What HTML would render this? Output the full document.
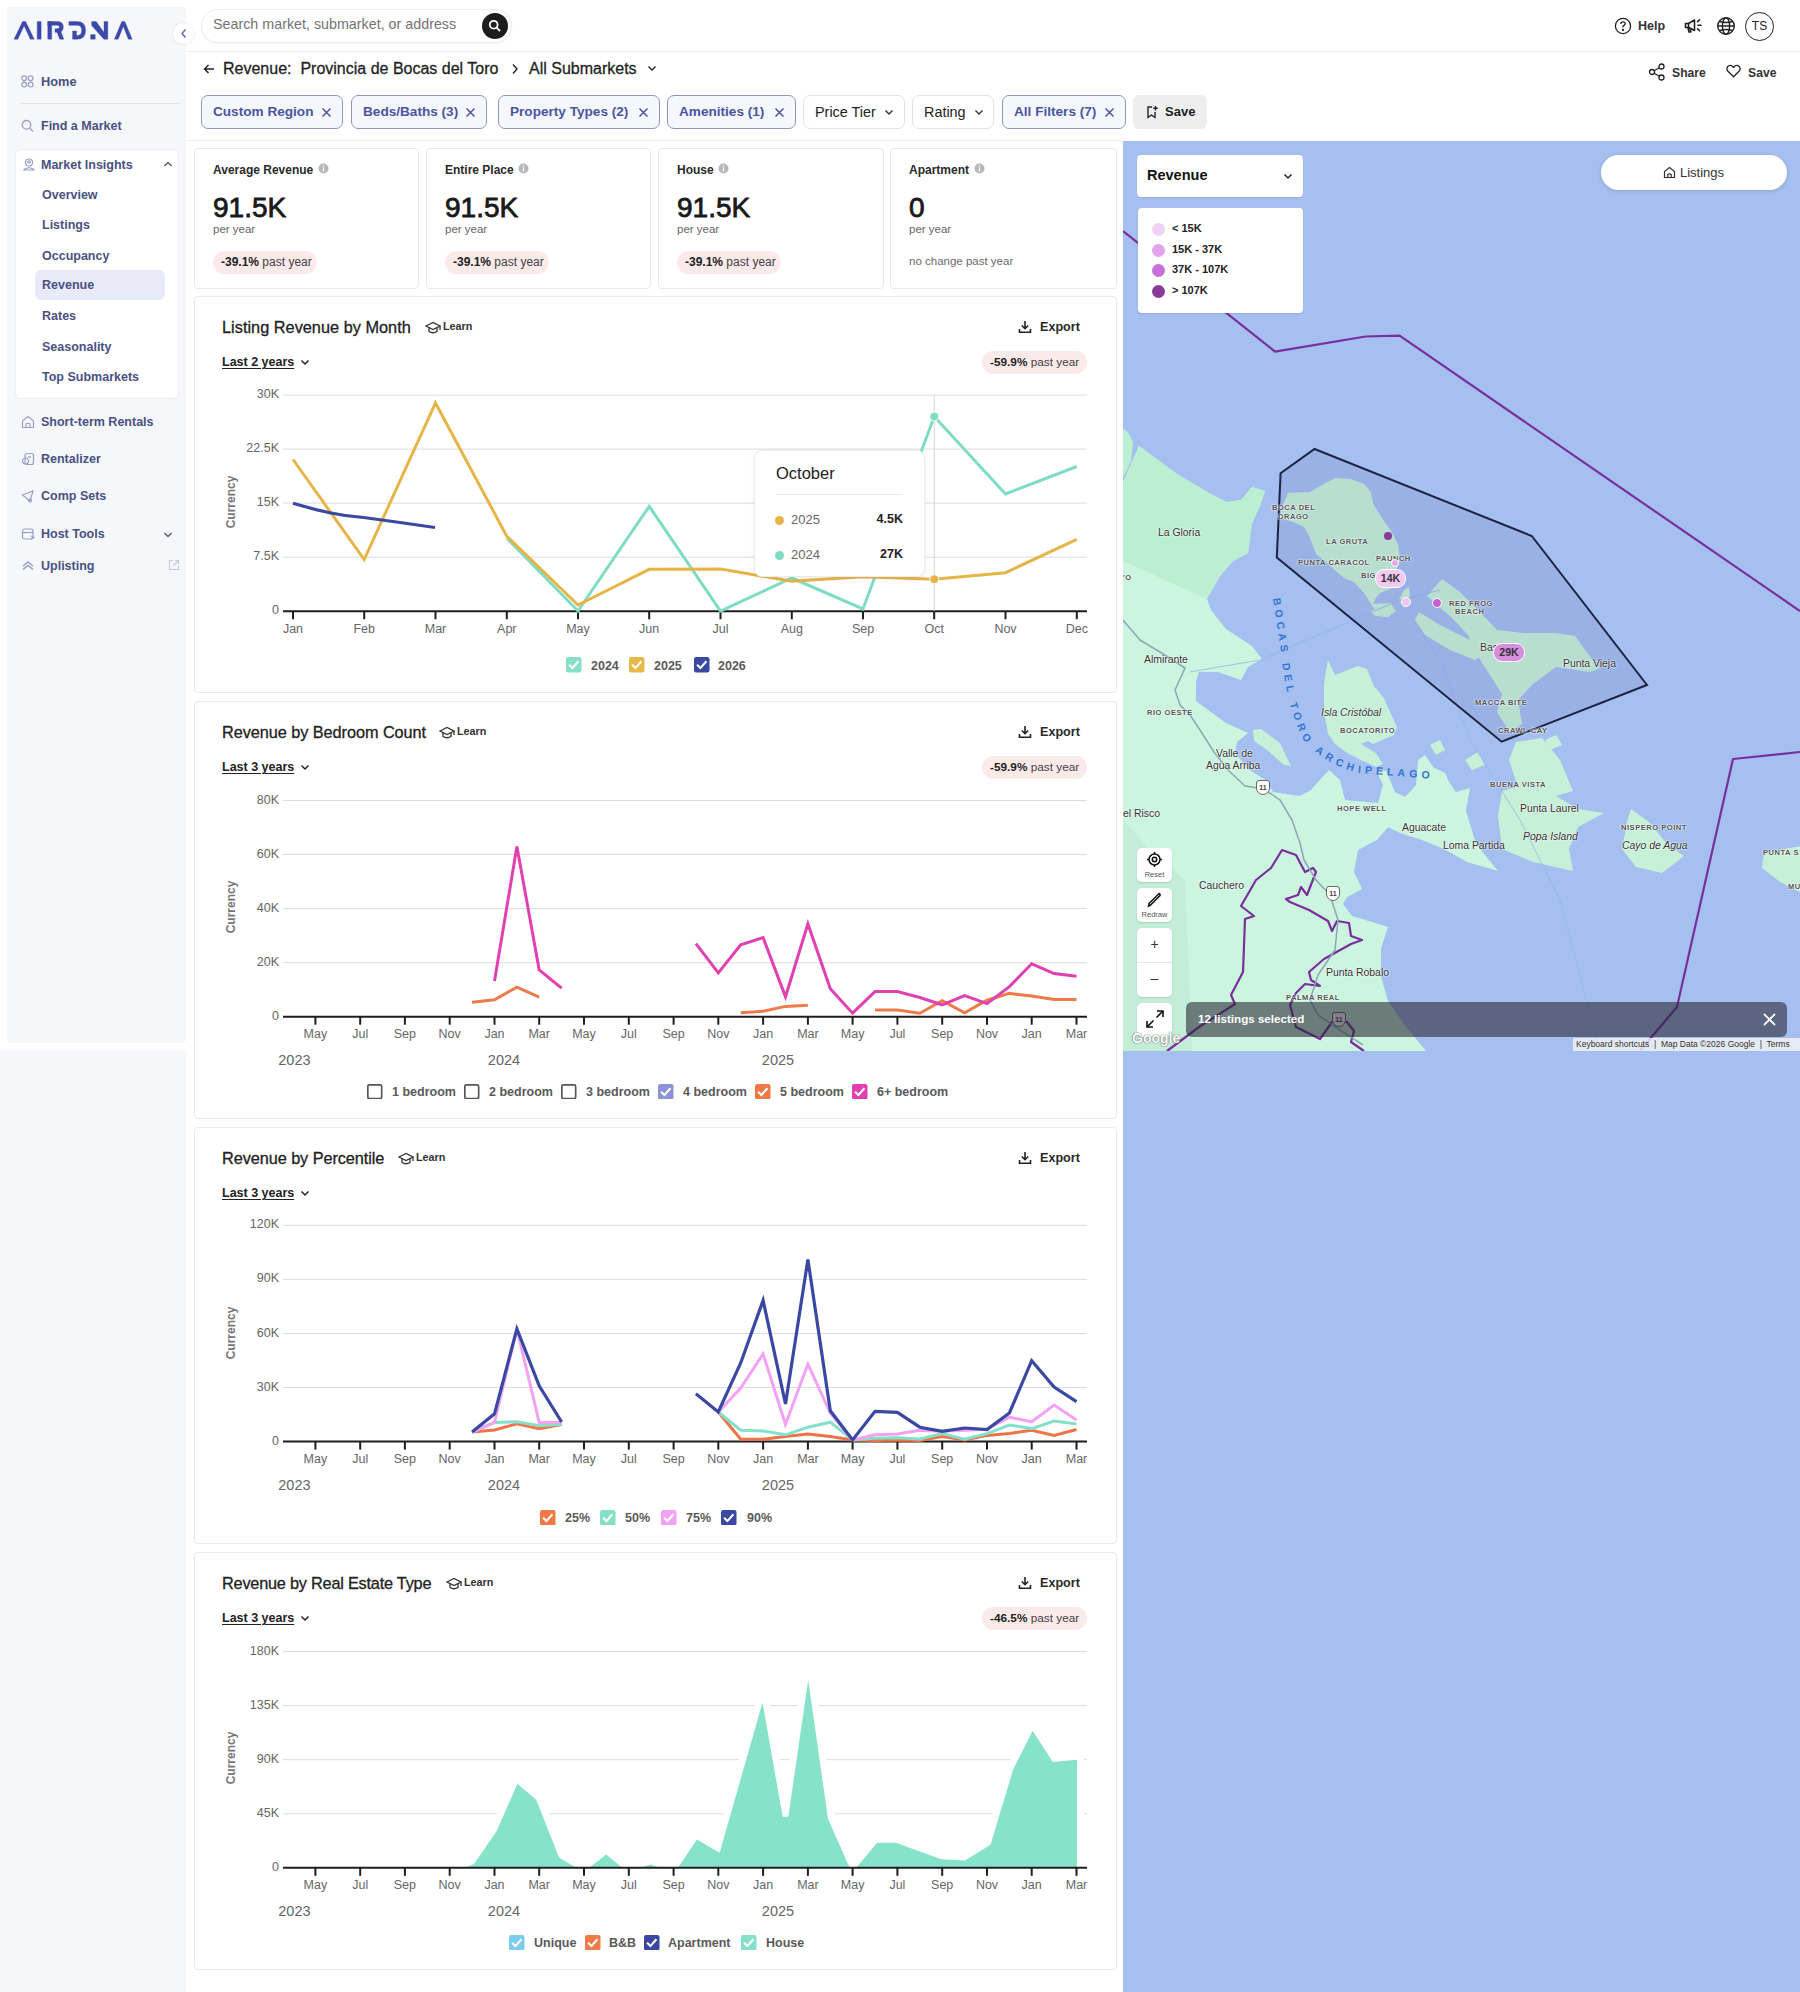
<!DOCTYPE html><html><head><meta charset="utf-8"><style>

*{box-sizing:border-box;margin:0;padding:0}
html,body{width:1800px;height:1992px;overflow:hidden;background:#fff;font-family:"Liberation Sans",sans-serif;color:#222;position:relative}
.a{position:absolute;white-space:nowrap}
.sb{color:#4a5183;font-weight:bold;font-size:12.5px}
.chip{position:absolute;top:95px;height:34px;border:1.5px solid #8f95bd;background:#f6f7fc;border-radius:7px;color:#4a55a0;font-weight:bold;font-size:13.6px;line-height:31px;padding-left:11px}
.chip2{position:absolute;top:95px;height:34px;border:1px solid #e2e2e6;background:#fff;border-radius:7px;color:#222;font-size:14.4px;line-height:32px;padding-left:11px}
.card{position:absolute;border:1px solid #e9e9ed;border-radius:4px;background:#fff}
.klab{font-size:12px;font-weight:bold;color:#2a2a2a}
.kval{font-size:28px;color:#1a1a1a;-webkit-text-stroke:0.8px #1a1a1a}
.kper{font-size:11.5px;color:#666}
.pill{position:absolute;white-space:nowrap;height:23px;border-radius:12px;background:#fbeaea;font-size:12px;line-height:23px;padding:0 8px;color:#444}
.pill b{color:#222}
.ctitle{font-size:16.3px;color:#222;-webkit-text-stroke:0.3px #222}
.learn{font-size:11.5px;font-weight:bold;color:#333}
.period{font-size:12.5px;font-weight:bold;color:#222;text-decoration:underline;text-underline-offset:2px}
.export{font-size:13px;font-weight:bold;color:#222}
.ylab{font-size:12.5px;color:#666;text-align:right}
.xlab{font-size:12.5px;color:#666}
.cur{font-size:12px;font-weight:bold;color:#777;transform:rotate(-90deg);transform-origin:center}
.leg{font-size:12.5px;font-weight:bold;color:#5a5a5a}

</style></head><body>
<div class="a" style="left:7px;top:7px;width:179px;height:1036px;background:#f6f7fb;border-radius:4px"></div>
<div class="a" style="left:0;top:1050px;width:186px;height:942px;background:#f6f7fb"></div>
<svg class="a" style="left:13px;top:20px" width="122" height="22" viewBox="0 0 122 22">
<g fill="#3c49a8" stroke="#3c49a8" stroke-width="0.4" stroke-linejoin="round">
<path d="M1,19.2 L9.6,1.6 H12.6 L21.2,19.2 H17.4 L11.1,5.8 L4.8,19.2 Z"/>
<rect x="24.2" y="1.6" width="3.9" height="17.6"/>
<rect x="34.8" y="1.6" width="3.9" height="17.6"/>
<path d="M34.8,1.6 H44 Q50.3,1.6 50.3,7 Q50.3,12.3 44.5,12.3 H42 V8.7 H44 Q46.5,8.7 46.5,7 Q46.5,5.2 44,5.2 H34.8 Z"/>
<path d="M43.6,11 H47.6 L50.8,19.2 H46.8 Z"/>
<path d="M55.9,1.6 H64 Q72.6,1.6 72.6,10.4 Q72.6,19.2 64,19.2 H59.6 V11 H63.5 V15.5 H64 Q68.7,15.5 68.7,10.4 Q68.7,5.3 64,5.3 H55.9 Z"/>
<rect x="77.6" y="14.6" width="4.6" height="4.6"/>
<path d="M78.7,1.6 H83.2 L91,12.6 V1.6 H94.8 V19.2 H90.9 L78.7,5.6 Z"/>
<path d="M101.4,19.2 L108.8,1.6 H111.8 L119.2,19.2 H115.4 L110.3,6.2 L105.2,19.2 Z"/>
</g></svg>
<div class="a" style="left:173px;top:23px;width:21px;height:21px;border-radius:50%;background:#fff;box-shadow:0 0 3px rgba(0,0,0,.12)"></div>
<svg class="a" style="left:179px;top:28px" width="10" height="11" viewBox="0 0 10 11"><path d="M6.5 1.5 L3 5.5 L6.5 9.5" stroke="#5a64a8" stroke-width="1.4" fill="none"/></svg>
<svg class="a" style="left:21px;top:75px" width="13" height="13" viewBox="0 0 13 13" fill="none" stroke="#9aa0c4" stroke-width="1.2"><circle cx="3.2" cy="3.2" r="2.4"/><circle cx="9.6" cy="3.2" r="2.4"/><circle cx="3.2" cy="9.6" r="2.4"/><circle cx="9.6" cy="9.6" r="2.4"/></svg>
<div class="a sb" style="left:41px;top:74px;font-size:12.8px">Home</div>
<div class="a" style="left:21px;top:103px;width:160px;height:1px;background:#e3e4ea"></div>
<svg class="a" style="left:21px;top:119px" width="13" height="14" viewBox="0 0 13 14" fill="none" stroke="#9aa0c4" stroke-width="1.3"><circle cx="5.5" cy="5.8" r="4.3"/><path d="M8.7 9.2 L12 12.5"/></svg>
<div class="a sb" style="left:41px;top:119px">Find a Market</div>
<div class="a" style="left:15px;top:149px;width:164px;height:250px;background:#fff;border:1px solid #eceef3;border-radius:6px"></div>
<svg class="a" style="left:22px;top:157px" width="14" height="14" viewBox="0 0 14 14" fill="none" stroke="#9aa0c4" stroke-width="1.2"><circle cx="7" cy="5.5" r="3.5"/><circle cx="7" cy="5" r="1.2"/><path d="M2 12.5 Q7 9 12 12.5 L12 13 H2 Z"/></svg>
<div class="a sb" style="left:41px;top:158px">Market Insights</div>
<svg class="a" style="left:163px;top:160px" width="10" height="8" viewBox="0 0 10 8"><path d="M1.5 6 L5 2.5 L8.5 6" stroke="#556" stroke-width="1.3" fill="none"/></svg>
<div class="a sb" style="left:42px;top:188px">Overview</div>
<div class="a sb" style="left:42px;top:218px">Listings</div>
<div class="a sb" style="left:42px;top:248.5px">Occupancy</div>
<div class="a" style="left:35px;top:270px;width:130px;height:30px;background:#e8eaf8;border-radius:6px"></div>
<div class="a sb" style="left:42px;top:278px">Revenue</div>
<div class="a sb" style="left:42px;top:309px">Rates</div>
<div class="a sb" style="left:42px;top:339.5px">Seasonality</div>
<div class="a sb" style="left:42px;top:369.5px">Top Submarkets</div>
<svg class="a" style="left:21px;top:415px" width="14" height="14" viewBox="0 0 14 14" fill="none" stroke="#9aa0c4" stroke-width="1.2"><path d="M1.5 12.5 V6 L7 1.5 L12.5 6 V12.5 Z"/><path d="M5 12.5 V9 Q7 7.5 9 9 V12.5"/></svg>
<div class="a sb" style="left:41px;top:415px">Short-term Rentals</div>
<svg class="a" style="left:21px;top:452px" width="14" height="14" viewBox="0 0 14 14" fill="none" stroke="#9aa0c4" stroke-width="1.2"><rect x="4" y="1.5" width="8.5" height="11" rx="2"/><circle cx="4.5" cy="9" r="3"/><path d="M7 5 H10"/></svg>
<div class="a sb" style="left:41px;top:452px">Rentalizer</div>
<svg class="a" style="left:21px;top:489px" width="14" height="14" viewBox="0 0 14 14" fill="none" stroke="#9aa0c4" stroke-width="1.2"><path d="M1.5 6 L12 2 L9 12 Z"/><circle cx="9" cy="11.5" r="1.5"/></svg>
<div class="a sb" style="left:41px;top:489px">Comp Sets</div>
<svg class="a" style="left:21px;top:527px" width="14" height="14" viewBox="0 0 14 14" fill="none" stroke="#9aa0c4" stroke-width="1.2"><rect x="1.5" y="2" width="10.5" height="10" rx="2"/><path d="M1.5 5.5 H12"/><path d="M10 9 L13 10.5 L10 12"/></svg>
<div class="a sb" style="left:41px;top:527px">Host Tools</div>
<svg class="a" style="left:163px;top:531px" width="10" height="8" viewBox="0 0 10 8"><path d="M1.5 2 L5 5.5 L8.5 2" stroke="#556" stroke-width="1.3" fill="none"/></svg>
<svg class="a" style="left:21px;top:559px" width="14" height="13" viewBox="0 0 14 13" fill="none" stroke="#9aa0c4" stroke-width="1.5"><path d="M2 7 L7 3 L12 7"/><path d="M2 10.5 L7 6.5 L12 10.5"/></svg>
<div class="a sb" style="left:41px;top:559px">Uplisting</div>
<svg class="a" style="left:168px;top:559px" width="12" height="12" viewBox="0 0 12 12" fill="none" stroke="#c5c9e0" stroke-width="1.1"><path d="M5 1.5 H1.5 V10.5 H10.5 V7"/><path d="M7 1.5 H10.5 V5 M10.5 1.5 L5.5 6.5"/></svg>
<div class="a" style="left:187px;top:51px;width:1613px;height:1px;background:#ececef"></div>
<div class="a" style="left:201px;top:9px;width:311px;height:34px;border-radius:17px;background:#fff;border:1px solid #ededf0;box-shadow:0 1px 2px rgba(0,0,0,.04)"></div>
<div class="a" style="left:213px;top:16px;font-size:14.3px;color:#737373">Search market, submarket, or address</div>
<div class="a" style="left:482px;top:12.5px;width:26px;height:26px;border-radius:50%;background:#1d1d1d"></div>
<svg class="a" style="left:488px;top:18.5px" width="14" height="14" viewBox="0 0 14 14" fill="none" stroke="#fff" stroke-width="1.8"><circle cx="5.7" cy="5.7" r="3.9"/><path d="M8.6 8.6 L12 12"/></svg>
<svg class="a" style="left:1614px;top:17px" width="18" height="18" viewBox="0 0 18 18" fill="none" stroke="#222" stroke-width="1.3"><circle cx="9" cy="9" r="7.6"/><path d="M6.8 7 Q6.8 4.8 9 4.8 Q11.2 4.8 11.2 6.8 Q11.2 8.2 9 9 V10.5"/><circle cx="9" cy="13" r=".5" fill="#222"/></svg>
<div class="a" style="left:1638px;top:18.5px;font-size:12.5px;font-weight:bold;color:#333">Help</div>
<svg class="a" style="left:1684px;top:18px" width="19" height="16" viewBox="0 0 19 16" fill="none" stroke="#1e1e1e" stroke-width="1.6" stroke-linejoin="round" stroke-linecap="round"><path d="M1.5 5.5 H4.5 L10.5 2 V12.5 L4.5 9.5 H1.5 Z"/><path d="M4 9.7 L5 14 H6.8 L6.3 10.3"/><path d="M4.5 5.5 V9.5"/><path d="M14 7.3 H17 M13.5 3.8 L15.5 1.8 M13.5 10.8 L15.5 12.8"/></svg>
<svg class="a" style="left:1716px;top:16px" width="20" height="20" viewBox="0 0 20 20" fill="none" stroke="#222" stroke-width="1.4"><circle cx="10" cy="10" r="8.3"/><ellipse cx="10" cy="10" rx="3.6" ry="8.3"/><path d="M1.7 10 H18.3 M3.5 5.5 Q10 7.5 16.5 5.5 M3.5 14.5 Q10 12.5 16.5 14.5"/></svg>
<div class="a" style="left:1745px;top:12px;width:29px;height:29px;border-radius:50%;border:1.2px solid #222;font-size:12px;color:#222;text-align:center;line-height:27px">TS</div>
<svg class="a" style="left:203px;top:63px" width="12" height="12" viewBox="0 0 12 12" fill="none" stroke="#222" stroke-width="1.4"><path d="M11 6 H1.5 M5.5 2 L1.5 6 L5.5 10"/></svg>
<div class="a" style="left:223px;top:60px;font-size:16px;color:#1f1f1f;-webkit-text-stroke:0.3px #1f1f1f">Revenue:&nbsp; Provincia de Bocas del Toro</div>
<svg class="a" style="left:511px;top:63px" width="8" height="12" viewBox="0 0 8 12" fill="none" stroke="#222" stroke-width="1.4"><path d="M2 1.5 L6 6 L2 10.5"/></svg>
<div class="a" style="left:529px;top:60px;font-size:16px;color:#1f1f1f;-webkit-text-stroke:0.3px #1f1f1f">All Submarkets</div>
<svg class="a" style="left:647px;top:65px" width="10" height="7" viewBox="0 0 10 7"><path d="M1.5 1.5 L5 5 L8.5 1.5" stroke="#222" stroke-width="1.4" fill="none"/></svg>
<svg class="a" style="left:1648px;top:63px" width="18" height="18" viewBox="0 0 18 18" fill="none" stroke="#222" stroke-width="1.3"><circle cx="4" cy="9" r="2.5"/><circle cx="13.5" cy="3.5" r="2.5"/><circle cx="13.5" cy="14.5" r="2.5"/><path d="M6.2 7.8 L11.3 4.8 M6.2 10.2 L11.3 13.2"/></svg>
<div class="a" style="left:1672px;top:65.5px;font-size:12.2px;font-weight:bold;color:#333">Share</div>
<svg class="a" style="left:1726px;top:64px" width="15" height="14" viewBox="0 0 15 14" fill="none" stroke="#222" stroke-width="1.3"><path d="M7.5 12.8 L2 7.3 Q0 5 1.5 2.8 Q3.5 0.5 6 2 L7.5 3.3 L9 2 Q11.5 0.5 13.5 2.8 Q15 5 13 7.3 Z"/></svg>
<div class="a" style="left:1748px;top:65.5px;font-size:12.2px;font-weight:bold;color:#333">Save</div>
<div class="chip" style="left:201px;width:142px">Custom Region</div>
<svg class="a" style="left:321px;top:107px" width="11" height="11" viewBox="0 0 11 11"><path d="M1.5 1.5 L9.5 9.5 M9.5 1.5 L1.5 9.5" stroke="#4a55a0" stroke-width="1.5"/></svg>
<div class="chip" style="left:351px;width:136px">Beds/Baths (3)</div>
<svg class="a" style="left:465px;top:107px" width="11" height="11" viewBox="0 0 11 11"><path d="M1.5 1.5 L9.5 9.5 M9.5 1.5 L1.5 9.5" stroke="#4a55a0" stroke-width="1.5"/></svg>
<div class="chip" style="left:498px;width:162px">Property Types (2)</div>
<svg class="a" style="left:638px;top:107px" width="11" height="11" viewBox="0 0 11 11"><path d="M1.5 1.5 L9.5 9.5 M9.5 1.5 L1.5 9.5" stroke="#4a55a0" stroke-width="1.5"/></svg>
<div class="chip" style="left:667px;width:129px">Amenities (1)</div>
<svg class="a" style="left:774px;top:107px" width="11" height="11" viewBox="0 0 11 11"><path d="M1.5 1.5 L9.5 9.5 M9.5 1.5 L1.5 9.5" stroke="#4a55a0" stroke-width="1.5"/></svg>
<div class="chip2" style="left:803px;width:102px">Price Tier</div>
<svg class="a" style="left:884px;top:109px" width="10" height="7" viewBox="0 0 10 7"><path d="M1.5 1.5 L5 5 L8.5 1.5" stroke="#333" stroke-width="1.4" fill="none"/></svg>
<div class="chip2" style="left:912px;width:82px">Rating</div>
<svg class="a" style="left:974px;top:109px" width="10" height="7" viewBox="0 0 10 7"><path d="M1.5 1.5 L5 5 L8.5 1.5" stroke="#333" stroke-width="1.4" fill="none"/></svg>
<div class="chip" style="left:1002px;width:124px">All Filters (7)</div>
<svg class="a" style="left:1104px;top:107px" width="11" height="11" viewBox="0 0 11 11"><path d="M1.5 1.5 L9.5 9.5 M9.5 1.5 L1.5 9.5" stroke="#4a55a0" stroke-width="1.5"/></svg>
<div class="a" style="left:1133px;top:95px;width:74px;height:34px;border-radius:6px;background:#eeeeef"></div>
<svg class="a" style="left:1146px;top:105px" width="13" height="14" viewBox="0 0 13 14" fill="none" stroke="#222" stroke-width="1.4"><path d="M6 2 H2 V12.5 L5.5 10 L9 12.5 V7"/><path d="M9.5 1 V5.5 M7.3 3.2 H11.7"/></svg>
<div class="a" style="left:1165px;top:104px;font-size:13px;font-weight:bold;color:#222">Save</div>
<div class="a" style="left:187px;top:140px;width:936px;height:1px;background:#efeff2"></div>
<div class="card" style="left:194px;top:148px;width:225px;height:141px"></div>
<div class="a klab" style="left:213px;top:163px">Average Revenue</div>
<svg class="a" style="left:318px;top:163px" width="11" height="11" viewBox="0 0 11 11"><circle cx="5.5" cy="5.5" r="5" fill="#b8b8bc"/><rect x="4.8" y="4.6" width="1.4" height="3.8" fill="#fff"/><circle cx="5.5" cy="3" r=".8" fill="#fff"/></svg>
<div class="a kval" style="left:213px;top:192px">91.5K</div>
<div class="a kper" style="left:213px;top:223px">per year</div>
<div class="pill" style="left:213px;top:251px;width:104px"><b>-39.1%</b> past year</div>
<div class="card" style="left:426px;top:148px;width:225px;height:141px"></div>
<div class="a klab" style="left:445px;top:163px">Entire Place</div>
<svg class="a" style="left:518px;top:163px" width="11" height="11" viewBox="0 0 11 11"><circle cx="5.5" cy="5.5" r="5" fill="#b8b8bc"/><rect x="4.8" y="4.6" width="1.4" height="3.8" fill="#fff"/><circle cx="5.5" cy="3" r=".8" fill="#fff"/></svg>
<div class="a kval" style="left:445px;top:192px">91.5K</div>
<div class="a kper" style="left:445px;top:223px">per year</div>
<div class="pill" style="left:445px;top:251px;width:104px"><b>-39.1%</b> past year</div>
<div class="card" style="left:658px;top:148px;width:226px;height:141px"></div>
<div class="a klab" style="left:677px;top:163px">House</div>
<svg class="a" style="left:718px;top:163px" width="11" height="11" viewBox="0 0 11 11"><circle cx="5.5" cy="5.5" r="5" fill="#b8b8bc"/><rect x="4.8" y="4.6" width="1.4" height="3.8" fill="#fff"/><circle cx="5.5" cy="3" r=".8" fill="#fff"/></svg>
<div class="a kval" style="left:677px;top:192px">91.5K</div>
<div class="a kper" style="left:677px;top:223px">per year</div>
<div class="pill" style="left:677px;top:251px;width:104px"><b>-39.1%</b> past year</div>
<div class="card" style="left:890px;top:148px;width:227px;height:141px"></div>
<div class="a klab" style="left:909px;top:163px">Apartment</div>
<svg class="a" style="left:974px;top:163px" width="11" height="11" viewBox="0 0 11 11"><circle cx="5.5" cy="5.5" r="5" fill="#b8b8bc"/><rect x="4.8" y="4.6" width="1.4" height="3.8" fill="#fff"/><circle cx="5.5" cy="3" r=".8" fill="#fff"/></svg>
<div class="a kval" style="left:909px;top:192px">0</div>
<div class="a kper" style="left:909px;top:223px">per year</div>
<div class="a" style="left:909px;top:255px;font-size:11.5px;color:#6b6b6b">no change past year</div>
<div class="card" style="left:194px;top:296px;width:923px;height:397px"></div>
<div class="a ctitle" style="left:222px;top:318px;letter-spacing:0.023px">Listing Revenue by Month</div>
<svg class="a" style="left:425px;top:321px" width="16" height="14" viewBox="0 0 16 14" fill="none" stroke="#333" stroke-width="1.3"><path d="M1 5 L8 1.5 L15 5 L8 8.5 Z"/><path d="M4 6.5 V10.5 Q8 13 12 10.5 V6.5"/><path d="M15 5 V9"/></svg>
<div class="a learn" style="left:443px;top:320px;font-size:10.8px">Learn</div>
<svg class="a" style="left:1018px;top:320px" width="14" height="14" viewBox="0 0 14 14" fill="none" stroke="#222" stroke-width="1.6"><path d="M7 1 V8.5 M3.8 5.5 L7 8.7 L10.2 5.5"/><path d="M1.5 9 V12.3 H12.5 V9"/></svg>
<div class="a export" style="left:1040px;top:320px;font-size:12.6px;color:#2a2a2a">Export</div>
<div class="a period" style="left:222px;top:355px">Last 2 years</div>
<svg class="a" style="left:300px;top:358.5px" width="10" height="7" viewBox="0 0 10 7"><path d="M1.5 1.5 L5 5 L8.5 1.5" stroke="#222" stroke-width="1.5" fill="none"/></svg>
<div class="pill" style="left:982px;top:351px;width:105px;font-size:11.8px"><b>-59.9%</b> past year</div>
<svg class="a" style="left:0;top:0" width="1800" height="1992"><line x1="283" y1="557.2" x2="1087" y2="557.2" stroke="#dcdcdf" stroke-width="1"/><line x1="283" y1="503.1" x2="1087" y2="503.1" stroke="#dcdcdf" stroke-width="1"/><line x1="283" y1="449.1" x2="1087" y2="449.1" stroke="#dcdcdf" stroke-width="1"/><line x1="283" y1="395.1" x2="1087" y2="395.1" stroke="#dcdcdf" stroke-width="1"/><line x1="283" y1="611.25" x2="1087" y2="611.25" stroke="#1e1e1e" stroke-width="2"/><line x1="293.0" y1="611.25" x2="293.0" y2="619.25" stroke="#1e1e1e" stroke-width="2"/><line x1="364.2" y1="611.25" x2="364.2" y2="619.25" stroke="#1e1e1e" stroke-width="2"/><line x1="435.5" y1="611.25" x2="435.5" y2="619.25" stroke="#1e1e1e" stroke-width="2"/><line x1="506.8" y1="611.25" x2="506.8" y2="619.25" stroke="#1e1e1e" stroke-width="2"/><line x1="578.0" y1="611.25" x2="578.0" y2="619.25" stroke="#1e1e1e" stroke-width="2"/><line x1="649.2" y1="611.25" x2="649.2" y2="619.25" stroke="#1e1e1e" stroke-width="2"/><line x1="720.5" y1="611.25" x2="720.5" y2="619.25" stroke="#1e1e1e" stroke-width="2"/><line x1="791.8" y1="611.25" x2="791.8" y2="619.25" stroke="#1e1e1e" stroke-width="2"/><line x1="863.0" y1="611.25" x2="863.0" y2="619.25" stroke="#1e1e1e" stroke-width="2"/><line x1="934.2" y1="611.25" x2="934.2" y2="619.25" stroke="#1e1e1e" stroke-width="2"/><line x1="1005.5" y1="611.25" x2="1005.5" y2="619.25" stroke="#1e1e1e" stroke-width="2"/><line x1="1076.8" y1="611.25" x2="1076.8" y2="619.25" stroke="#1e1e1e" stroke-width="2"/><line x1="934.3" y1="395" x2="934.3" y2="611" stroke="#d5d5d8" stroke-width="1"/><polyline points="506.8,538.0 578.0,611.0 649.2,506.3 720.5,611.0 791.8,578.0 863.0,609.0 934.2,416.5 1005.5,494.0 1076.8,466.5" fill="none" stroke="#7fdcc4" stroke-width="3" stroke-linejoin="miter" stroke-linecap="butt"/><polyline points="293.0,459.5 364.2,559.5 435.5,403.0 506.8,536.3 578.0,605.0 649.2,569.3 720.5,569.0 791.8,581.2 863.0,576.7 934.2,579.3 1005.5,572.7 1076.8,539.3" fill="none" stroke="#e6b548" stroke-width="3" stroke-linejoin="miter" stroke-linecap="butt"/><path d="M293.0,503.3 C320,511 340,516 363.75,517.5 C390,521 410,524 435,527.5" fill="none" stroke="#3a48a3" stroke-width="3.2"/><circle cx="934.3" cy="416.5" r="4.5" fill="#7fdcc4" stroke="#fff" stroke-width="1"/><circle cx="934.3" cy="579.3" r="4.5" fill="#e6b548" stroke="#fff" stroke-width="1"/></svg>
<div class="a ylab" style="left:219px;width:60px;top:603.2px">0</div>
<div class="a ylab" style="left:219px;width:60px;top:549.2px">7.5K</div>
<div class="a ylab" style="left:219px;width:60px;top:495.1px">15K</div>
<div class="a ylab" style="left:219px;width:60px;top:441.1px">22.5K</div>
<div class="a ylab" style="left:219px;width:60px;top:387.1px">30K</div>
<div class="a xlab" style="left:263.0px;width:60px;text-align:center;top:621.8px">Jan</div>
<div class="a xlab" style="left:334.2px;width:60px;text-align:center;top:621.8px">Feb</div>
<div class="a xlab" style="left:405.5px;width:60px;text-align:center;top:621.8px">Mar</div>
<div class="a xlab" style="left:476.8px;width:60px;text-align:center;top:621.8px">Apr</div>
<div class="a xlab" style="left:548.0px;width:60px;text-align:center;top:621.8px">May</div>
<div class="a xlab" style="left:619.2px;width:60px;text-align:center;top:621.8px">Jun</div>
<div class="a xlab" style="left:690.5px;width:60px;text-align:center;top:621.8px">Jul</div>
<div class="a xlab" style="left:761.8px;width:60px;text-align:center;top:621.8px">Aug</div>
<div class="a xlab" style="left:833.0px;width:60px;text-align:center;top:621.8px">Sep</div>
<div class="a xlab" style="left:904.2px;width:60px;text-align:center;top:621.8px">Oct</div>
<div class="a xlab" style="left:975.5px;width:60px;text-align:center;top:621.8px">Nov</div>
<div class="a xlab" style="left:1046.8px;width:60px;text-align:center;top:621.8px">Dec</div>
<div class="a cur" style="left:196px;width:70px;text-align:center;top:495px">Currency</div>
<div class="a" style="left:754px;top:450px;width:171px;height:127px;background:#fff;border:1px solid #ececef;border-radius:8px;box-shadow:0 1px 4px rgba(0,0,0,.08)"></div>
<div class="a" style="left:776px;top:464px;font-size:16.5px;color:#222">October</div>
<div class="a" style="left:776px;top:494px;width:127px;height:1px;background:#e8e8ea"></div>
<div class="a" style="left:775px;top:516px;width:9px;height:9px;border-radius:50%;background:#e6b548"></div>
<div class="a" style="left:791px;top:512px;font-size:13px;color:#666">2025</div>
<div class="a" style="left:843px;width:60px;text-align:right;top:512px;font-size:12.5px;font-weight:bold;color:#222">4.5K</div>
<div class="a" style="left:775px;top:551px;width:9px;height:9px;border-radius:50%;background:#7fdcc4"></div>
<div class="a" style="left:791px;top:547px;font-size:13px;color:#666">2024</div>
<div class="a" style="left:843px;width:60px;text-align:right;top:547px;font-size:12.5px;font-weight:bold;color:#222">27K</div>
<svg class="a" style="left:566px;top:657px" width="15.5" height="15.5" viewBox="0 0 14 14"><rect x="0" y="0" width="14" height="14" rx="2" fill="#86e0c8"/><path d="M2.8 7 L5.8 10 L11.2 3.8" stroke="#fff" stroke-width="1.9" fill="none"/></svg>
<div class="a leg" style="left:591px;top:658.5px">2024</div>
<svg class="a" style="left:629px;top:657px" width="15.5" height="15.5" viewBox="0 0 14 14"><rect x="0" y="0" width="14" height="14" rx="2" fill="#e9b84a"/><path d="M2.8 7 L5.8 10 L11.2 3.8" stroke="#fff" stroke-width="1.9" fill="none"/></svg>
<div class="a leg" style="left:654px;top:658.5px">2025</div>
<svg class="a" style="left:694px;top:657px" width="15.5" height="15.5" viewBox="0 0 14 14"><rect x="0" y="0" width="14" height="14" rx="2" fill="#3a48a3"/><path d="M2.8 7 L5.8 10 L11.2 3.8" stroke="#fff" stroke-width="1.9" fill="none"/></svg>
<div class="a leg" style="left:718px;top:658.5px">2026</div>
<div class="card" style="left:194px;top:701px;width:923px;height:418px"></div>
<div class="a ctitle" style="left:222px;top:723px;letter-spacing:-0.057px">Revenue by Bedroom Count</div>
<svg class="a" style="left:439px;top:726px" width="16" height="14" viewBox="0 0 16 14" fill="none" stroke="#333" stroke-width="1.3"><path d="M1 5 L8 1.5 L15 5 L8 8.5 Z"/><path d="M4 6.5 V10.5 Q8 13 12 10.5 V6.5"/><path d="M15 5 V9"/></svg>
<div class="a learn" style="left:457px;top:725px;font-size:10.8px">Learn</div>
<svg class="a" style="left:1018px;top:725px" width="14" height="14" viewBox="0 0 14 14" fill="none" stroke="#222" stroke-width="1.6"><path d="M7 1 V8.5 M3.8 5.5 L7 8.7 L10.2 5.5"/><path d="M1.5 9 V12.3 H12.5 V9"/></svg>
<div class="a export" style="left:1040px;top:725px;font-size:12.6px;color:#2a2a2a">Export</div>
<div class="a period" style="left:222px;top:760px">Last 3 years</div>
<svg class="a" style="left:300px;top:763.5px" width="10" height="7" viewBox="0 0 10 7"><path d="M1.5 1.5 L5 5 L8.5 1.5" stroke="#222" stroke-width="1.5" fill="none"/></svg>
<div class="pill" style="left:982px;top:756px;width:105px;font-size:11.8px"><b>-59.9%</b> past year</div>
<svg class="a" style="left:0;top:0" width="1800" height="1992"><line x1="283" y1="962.7" x2="1087" y2="962.7" stroke="#dcdcdf" stroke-width="1"/><line x1="283" y1="908.6" x2="1087" y2="908.6" stroke="#dcdcdf" stroke-width="1"/><line x1="283" y1="854.5" x2="1087" y2="854.5" stroke="#dcdcdf" stroke-width="1"/><line x1="283" y1="800.5" x2="1087" y2="800.5" stroke="#dcdcdf" stroke-width="1"/><line x1="283" y1="1016.7" x2="1087" y2="1016.7" stroke="#1e1e1e" stroke-width="2"/><line x1="315.4" y1="1016.7" x2="315.4" y2="1024.7" stroke="#1e1e1e" stroke-width="2"/><line x1="360.2" y1="1016.7" x2="360.2" y2="1024.7" stroke="#1e1e1e" stroke-width="2"/><line x1="404.9" y1="1016.7" x2="404.9" y2="1024.7" stroke="#1e1e1e" stroke-width="2"/><line x1="449.7" y1="1016.7" x2="449.7" y2="1024.7" stroke="#1e1e1e" stroke-width="2"/><line x1="494.5" y1="1016.7" x2="494.5" y2="1024.7" stroke="#1e1e1e" stroke-width="2"/><line x1="539.2" y1="1016.7" x2="539.2" y2="1024.7" stroke="#1e1e1e" stroke-width="2"/><line x1="584.0" y1="1016.7" x2="584.0" y2="1024.7" stroke="#1e1e1e" stroke-width="2"/><line x1="628.8" y1="1016.7" x2="628.8" y2="1024.7" stroke="#1e1e1e" stroke-width="2"/><line x1="673.6" y1="1016.7" x2="673.6" y2="1024.7" stroke="#1e1e1e" stroke-width="2"/><line x1="718.3" y1="1016.7" x2="718.3" y2="1024.7" stroke="#1e1e1e" stroke-width="2"/><line x1="763.1" y1="1016.7" x2="763.1" y2="1024.7" stroke="#1e1e1e" stroke-width="2"/><line x1="807.9" y1="1016.7" x2="807.9" y2="1024.7" stroke="#1e1e1e" stroke-width="2"/><line x1="852.6" y1="1016.7" x2="852.6" y2="1024.7" stroke="#1e1e1e" stroke-width="2"/><line x1="897.4" y1="1016.7" x2="897.4" y2="1024.7" stroke="#1e1e1e" stroke-width="2"/><line x1="942.2" y1="1016.7" x2="942.2" y2="1024.7" stroke="#1e1e1e" stroke-width="2"/><line x1="987.0" y1="1016.7" x2="987.0" y2="1024.7" stroke="#1e1e1e" stroke-width="2"/><line x1="1031.7" y1="1016.7" x2="1031.7" y2="1024.7" stroke="#1e1e1e" stroke-width="2"/><line x1="1076.5" y1="1016.7" x2="1076.5" y2="1024.7" stroke="#1e1e1e" stroke-width="2"/><polyline points="472.1,1002.2 494.5,999.7 516.9,987.1 539.2,997.2" fill="none" stroke="#ee7a4a" stroke-width="3" stroke-linejoin="miter" stroke-linecap="butt"/><polyline points="740.7,1012.8 763.1,1011.2 785.5,1006.4 807.9,1005.2" fill="none" stroke="#ee7a4a" stroke-width="3" stroke-linejoin="miter" stroke-linecap="butt"/><polyline points="875.0,1010.0 897.4,1010.0 919.8,1013.2 942.2,1000.7 964.6,1012.8 987.0,1000.2 1009.4,993.4 1031.7,996.1 1054.1,999.5 1076.5,999.5" fill="none" stroke="#ee7a4a" stroke-width="3" stroke-linejoin="miter" stroke-linecap="butt"/><polyline points="494.5,981.1 516.9,846.6 539.2,970.0 561.6,988.1" fill="none" stroke="#e040b0" stroke-width="3" stroke-linejoin="miter" stroke-linecap="butt"/><polyline points="695.9,943.7 718.3,972.9 740.7,944.9 763.1,937.6 785.5,996.8 807.9,923.9 830.3,988.8 852.6,1013.2 875.0,991.6 897.4,991.6 919.8,997.5 942.2,1004.8 964.6,995.7 987.0,1003.6 1009.4,986.6 1031.7,963.8 1054.1,973.6 1076.5,976.3" fill="none" stroke="#e040b0" stroke-width="3" stroke-linejoin="miter" stroke-linecap="butt"/></svg>
<div class="a ylab" style="left:219px;width:60px;top:1008.7px">0</div>
<div class="a ylab" style="left:219px;width:60px;top:954.7px">20K</div>
<div class="a ylab" style="left:219px;width:60px;top:900.6px">40K</div>
<div class="a ylab" style="left:219px;width:60px;top:846.5px">60K</div>
<div class="a ylab" style="left:219px;width:60px;top:792.5px">80K</div>
<div class="a xlab" style="left:285.4px;width:60px;text-align:center;top:1027.2px">May</div>
<div class="a xlab" style="left:330.2px;width:60px;text-align:center;top:1027.2px">Jul</div>
<div class="a xlab" style="left:374.9px;width:60px;text-align:center;top:1027.2px">Sep</div>
<div class="a xlab" style="left:419.7px;width:60px;text-align:center;top:1027.2px">Nov</div>
<div class="a xlab" style="left:464.5px;width:60px;text-align:center;top:1027.2px">Jan</div>
<div class="a xlab" style="left:509.2px;width:60px;text-align:center;top:1027.2px">Mar</div>
<div class="a xlab" style="left:554.0px;width:60px;text-align:center;top:1027.2px">May</div>
<div class="a xlab" style="left:598.8px;width:60px;text-align:center;top:1027.2px">Jul</div>
<div class="a xlab" style="left:643.6px;width:60px;text-align:center;top:1027.2px">Sep</div>
<div class="a xlab" style="left:688.3px;width:60px;text-align:center;top:1027.2px">Nov</div>
<div class="a xlab" style="left:733.1px;width:60px;text-align:center;top:1027.2px">Jan</div>
<div class="a xlab" style="left:777.9px;width:60px;text-align:center;top:1027.2px">Mar</div>
<div class="a xlab" style="left:822.6px;width:60px;text-align:center;top:1027.2px">May</div>
<div class="a xlab" style="left:867.4px;width:60px;text-align:center;top:1027.2px">Jul</div>
<div class="a xlab" style="left:912.2px;width:60px;text-align:center;top:1027.2px">Sep</div>
<div class="a xlab" style="left:957.0px;width:60px;text-align:center;top:1027.2px">Nov</div>
<div class="a xlab" style="left:1001.7px;width:60px;text-align:center;top:1027.2px">Jan</div>
<div class="a xlab" style="left:1046.5px;width:60px;text-align:center;top:1027.2px">Mar</div>
<div class="a xlab" style="left:264.4px;width:60px;text-align:center;top:1052.2px;font-size:14.5px">2023</div>
<div class="a xlab" style="left:474.0px;width:60px;text-align:center;top:1052.2px;font-size:14.5px">2024</div>
<div class="a xlab" style="left:748.0px;width:60px;text-align:center;top:1052.2px;font-size:14.5px">2025</div>
<div class="a cur" style="left:196px;width:70px;text-align:center;top:900px">Currency</div>
<svg class="a" style="left:367px;top:1083.5px" width="15.5" height="15.5" viewBox="0 0 14 14"><rect x="0.75" y="0.75" width="12.5" height="12.5" rx="1.5" fill="#fff" stroke="#555" stroke-width="1.5"/></svg>
<div class="a leg" style="left:392px;top:1084.5px">1 bedroom</div>
<svg class="a" style="left:464px;top:1083.5px" width="15.5" height="15.5" viewBox="0 0 14 14"><rect x="0.75" y="0.75" width="12.5" height="12.5" rx="1.5" fill="#fff" stroke="#555" stroke-width="1.5"/></svg>
<div class="a leg" style="left:489px;top:1084.5px">2 bedroom</div>
<svg class="a" style="left:561px;top:1083.5px" width="15.5" height="15.5" viewBox="0 0 14 14"><rect x="0.75" y="0.75" width="12.5" height="12.5" rx="1.5" fill="#fff" stroke="#555" stroke-width="1.5"/></svg>
<div class="a leg" style="left:586px;top:1084.5px">3 bedroom</div>
<svg class="a" style="left:658px;top:1083.5px" width="15.5" height="15.5" viewBox="0 0 14 14"><rect x="0" y="0" width="14" height="14" rx="2" fill="#8c93d8"/><path d="M2.8 7 L5.8 10 L11.2 3.8" stroke="#fff" stroke-width="1.9" fill="none"/></svg>
<div class="a leg" style="left:683px;top:1084.5px">4 bedroom</div>
<svg class="a" style="left:755px;top:1083.5px" width="15.5" height="15.5" viewBox="0 0 14 14"><rect x="0" y="0" width="14" height="14" rx="2" fill="#f07a45"/><path d="M2.8 7 L5.8 10 L11.2 3.8" stroke="#fff" stroke-width="1.9" fill="none"/></svg>
<div class="a leg" style="left:780px;top:1084.5px">5 bedroom</div>
<svg class="a" style="left:852px;top:1083.5px" width="15.5" height="15.5" viewBox="0 0 14 14"><rect x="0" y="0" width="14" height="14" rx="2" fill="#e040b0"/><path d="M2.8 7 L5.8 10 L11.2 3.8" stroke="#fff" stroke-width="1.9" fill="none"/></svg>
<div class="a leg" style="left:877px;top:1084.5px">6+ bedroom</div>
<div class="card" style="left:194px;top:1127px;width:923px;height:417px"></div>
<div class="a ctitle" style="left:222px;top:1149px;letter-spacing:-0.071px">Revenue by Percentile</div>
<svg class="a" style="left:398px;top:1152px" width="16" height="14" viewBox="0 0 16 14" fill="none" stroke="#333" stroke-width="1.3"><path d="M1 5 L8 1.5 L15 5 L8 8.5 Z"/><path d="M4 6.5 V10.5 Q8 13 12 10.5 V6.5"/><path d="M15 5 V9"/></svg>
<div class="a learn" style="left:416px;top:1151px;font-size:10.8px">Learn</div>
<svg class="a" style="left:1018px;top:1151px" width="14" height="14" viewBox="0 0 14 14" fill="none" stroke="#222" stroke-width="1.6"><path d="M7 1 V8.5 M3.8 5.5 L7 8.7 L10.2 5.5"/><path d="M1.5 9 V12.3 H12.5 V9"/></svg>
<div class="a export" style="left:1040px;top:1151px;font-size:12.6px;color:#2a2a2a">Export</div>
<div class="a period" style="left:222px;top:1186px">Last 3 years</div>
<svg class="a" style="left:300px;top:1189.5px" width="10" height="7" viewBox="0 0 10 7"><path d="M1.5 1.5 L5 5 L8.5 1.5" stroke="#222" stroke-width="1.5" fill="none"/></svg>
<svg class="a" style="left:0;top:0" width="1800" height="1992"><line x1="283" y1="1387.5" x2="1087" y2="1387.5" stroke="#dcdcdf" stroke-width="1"/><line x1="283" y1="1333.5" x2="1087" y2="1333.5" stroke="#dcdcdf" stroke-width="1"/><line x1="283" y1="1279.4" x2="1087" y2="1279.4" stroke="#dcdcdf" stroke-width="1"/><line x1="283" y1="1225.4" x2="1087" y2="1225.4" stroke="#dcdcdf" stroke-width="1"/><line x1="283" y1="1441.6" x2="1087" y2="1441.6" stroke="#1e1e1e" stroke-width="2"/><line x1="315.4" y1="1441.6" x2="315.4" y2="1449.6" stroke="#1e1e1e" stroke-width="2"/><line x1="360.2" y1="1441.6" x2="360.2" y2="1449.6" stroke="#1e1e1e" stroke-width="2"/><line x1="404.9" y1="1441.6" x2="404.9" y2="1449.6" stroke="#1e1e1e" stroke-width="2"/><line x1="449.7" y1="1441.6" x2="449.7" y2="1449.6" stroke="#1e1e1e" stroke-width="2"/><line x1="494.5" y1="1441.6" x2="494.5" y2="1449.6" stroke="#1e1e1e" stroke-width="2"/><line x1="539.2" y1="1441.6" x2="539.2" y2="1449.6" stroke="#1e1e1e" stroke-width="2"/><line x1="584.0" y1="1441.6" x2="584.0" y2="1449.6" stroke="#1e1e1e" stroke-width="2"/><line x1="628.8" y1="1441.6" x2="628.8" y2="1449.6" stroke="#1e1e1e" stroke-width="2"/><line x1="673.6" y1="1441.6" x2="673.6" y2="1449.6" stroke="#1e1e1e" stroke-width="2"/><line x1="718.3" y1="1441.6" x2="718.3" y2="1449.6" stroke="#1e1e1e" stroke-width="2"/><line x1="763.1" y1="1441.6" x2="763.1" y2="1449.6" stroke="#1e1e1e" stroke-width="2"/><line x1="807.9" y1="1441.6" x2="807.9" y2="1449.6" stroke="#1e1e1e" stroke-width="2"/><line x1="852.6" y1="1441.6" x2="852.6" y2="1449.6" stroke="#1e1e1e" stroke-width="2"/><line x1="897.4" y1="1441.6" x2="897.4" y2="1449.6" stroke="#1e1e1e" stroke-width="2"/><line x1="942.2" y1="1441.6" x2="942.2" y2="1449.6" stroke="#1e1e1e" stroke-width="2"/><line x1="987.0" y1="1441.6" x2="987.0" y2="1449.6" stroke="#1e1e1e" stroke-width="2"/><line x1="1031.7" y1="1441.6" x2="1031.7" y2="1449.6" stroke="#1e1e1e" stroke-width="2"/><line x1="1076.5" y1="1441.6" x2="1076.5" y2="1449.6" stroke="#1e1e1e" stroke-width="2"/><polyline points="472.1,1432.0 494.5,1430.0 516.9,1423.8 539.2,1428.8 561.6,1424.6" fill="none" stroke="#ee7448" stroke-width="3" stroke-linejoin="miter" stroke-linecap="butt"/><polyline points="718.3,1412.0 740.7,1439.3 763.1,1439.3 785.5,1436.4 807.9,1434.0 830.3,1436.4 852.6,1440.0 875.0,1440.5 897.4,1440.0 919.8,1440.5 942.2,1436.4 964.6,1440.0 987.0,1435.4 1009.4,1433.6 1031.7,1430.2 1054.1,1435.4 1076.5,1429.5" fill="none" stroke="#ee7448" stroke-width="3" stroke-linejoin="miter" stroke-linecap="butt"/><polyline points="472.1,1432.0 494.5,1422.5 516.9,1421.7 539.2,1425.8 561.6,1424.2" fill="none" stroke="#86dfc8" stroke-width="3" stroke-linejoin="miter" stroke-linecap="butt"/><polyline points="718.3,1412.0 740.7,1430.2 763.1,1430.9 785.5,1434.8 807.9,1427.2 830.3,1422.2 852.6,1440.0 875.0,1438.2 897.4,1437.7 919.8,1438.9 942.2,1433.6 964.6,1439.3 987.0,1433.6 1009.4,1425.0 1031.7,1428.6 1054.1,1421.1 1076.5,1424.0" fill="none" stroke="#86dfc8" stroke-width="3" stroke-linejoin="miter" stroke-linecap="butt"/><polyline points="472.1,1432.0 494.5,1422.5 516.9,1328.8 539.2,1422.5 561.6,1422.5" fill="none" stroke="#f3a2f3" stroke-width="3" stroke-linejoin="miter" stroke-linecap="butt"/><polyline points="718.3,1412.0 740.7,1388.0 763.1,1353.9 785.5,1424.5 807.9,1364.1 830.3,1413.0 852.6,1440.0 875.0,1434.8 897.4,1434.0 919.8,1430.2 942.2,1431.3 964.6,1430.2 987.0,1429.0 1009.4,1417.2 1031.7,1421.8 1054.1,1405.1 1076.5,1420.0" fill="none" stroke="#f3a2f3" stroke-width="3" stroke-linejoin="miter" stroke-linecap="butt"/><polyline points="472.1,1432.0 494.5,1413.8 516.9,1328.8 539.2,1385.8 561.6,1422.0" fill="none" stroke="#3a48a3" stroke-width="3.2" stroke-linejoin="miter" stroke-linecap="butt"/><polyline points="695.9,1393.8 718.3,1412.0 740.7,1363.0 763.1,1300.4 785.5,1404.0 807.9,1259.4 830.3,1410.8 852.6,1440.0 875.0,1411.3 897.4,1412.4 919.8,1427.2 942.2,1431.3 964.6,1428.0 987.0,1429.5 1009.4,1413.0 1031.7,1360.7 1054.1,1387.0 1076.5,1401.7" fill="none" stroke="#3a48a3" stroke-width="3.2" stroke-linejoin="miter" stroke-linecap="butt"/></svg>
<div class="a ylab" style="left:219px;width:60px;top:1433.6px">0</div>
<div class="a ylab" style="left:219px;width:60px;top:1379.5px">30K</div>
<div class="a ylab" style="left:219px;width:60px;top:1325.5px">60K</div>
<div class="a ylab" style="left:219px;width:60px;top:1271.4px">90K</div>
<div class="a ylab" style="left:219px;width:60px;top:1217.4px">120K</div>
<div class="a xlab" style="left:285.4px;width:60px;text-align:center;top:1452.1px">May</div>
<div class="a xlab" style="left:330.2px;width:60px;text-align:center;top:1452.1px">Jul</div>
<div class="a xlab" style="left:374.9px;width:60px;text-align:center;top:1452.1px">Sep</div>
<div class="a xlab" style="left:419.7px;width:60px;text-align:center;top:1452.1px">Nov</div>
<div class="a xlab" style="left:464.5px;width:60px;text-align:center;top:1452.1px">Jan</div>
<div class="a xlab" style="left:509.2px;width:60px;text-align:center;top:1452.1px">Mar</div>
<div class="a xlab" style="left:554.0px;width:60px;text-align:center;top:1452.1px">May</div>
<div class="a xlab" style="left:598.8px;width:60px;text-align:center;top:1452.1px">Jul</div>
<div class="a xlab" style="left:643.6px;width:60px;text-align:center;top:1452.1px">Sep</div>
<div class="a xlab" style="left:688.3px;width:60px;text-align:center;top:1452.1px">Nov</div>
<div class="a xlab" style="left:733.1px;width:60px;text-align:center;top:1452.1px">Jan</div>
<div class="a xlab" style="left:777.9px;width:60px;text-align:center;top:1452.1px">Mar</div>
<div class="a xlab" style="left:822.6px;width:60px;text-align:center;top:1452.1px">May</div>
<div class="a xlab" style="left:867.4px;width:60px;text-align:center;top:1452.1px">Jul</div>
<div class="a xlab" style="left:912.2px;width:60px;text-align:center;top:1452.1px">Sep</div>
<div class="a xlab" style="left:957.0px;width:60px;text-align:center;top:1452.1px">Nov</div>
<div class="a xlab" style="left:1001.7px;width:60px;text-align:center;top:1452.1px">Jan</div>
<div class="a xlab" style="left:1046.5px;width:60px;text-align:center;top:1452.1px">Mar</div>
<div class="a xlab" style="left:264.4px;width:60px;text-align:center;top:1477.1px;font-size:14.5px">2023</div>
<div class="a xlab" style="left:474.0px;width:60px;text-align:center;top:1477.1px;font-size:14.5px">2024</div>
<div class="a xlab" style="left:748.0px;width:60px;text-align:center;top:1477.1px;font-size:14.5px">2025</div>
<div class="a cur" style="left:196px;width:70px;text-align:center;top:1326px">Currency</div>
<svg class="a" style="left:540px;top:1509.5px" width="15.5" height="15.5" viewBox="0 0 14 14"><rect x="0" y="0" width="14" height="14" rx="2" fill="#f07a45"/><path d="M2.8 7 L5.8 10 L11.2 3.8" stroke="#fff" stroke-width="1.9" fill="none"/></svg>
<div class="a leg" style="left:565px;top:1510.5px">25%</div>
<svg class="a" style="left:600px;top:1509.5px" width="15.5" height="15.5" viewBox="0 0 14 14"><rect x="0" y="0" width="14" height="14" rx="2" fill="#86e0c8"/><path d="M2.8 7 L5.8 10 L11.2 3.8" stroke="#fff" stroke-width="1.9" fill="none"/></svg>
<div class="a leg" style="left:625px;top:1510.5px">50%</div>
<svg class="a" style="left:661px;top:1509.5px" width="15.5" height="15.5" viewBox="0 0 14 14"><rect x="0" y="0" width="14" height="14" rx="2" fill="#f3a2f3"/><path d="M2.8 7 L5.8 10 L11.2 3.8" stroke="#fff" stroke-width="1.9" fill="none"/></svg>
<div class="a leg" style="left:686px;top:1510.5px">75%</div>
<svg class="a" style="left:721px;top:1509.5px" width="15.5" height="15.5" viewBox="0 0 14 14"><rect x="0" y="0" width="14" height="14" rx="2" fill="#3a48a3"/><path d="M2.8 7 L5.8 10 L11.2 3.8" stroke="#fff" stroke-width="1.9" fill="none"/></svg>
<div class="a leg" style="left:747px;top:1510.5px">90%</div>
<div class="card" style="left:194px;top:1552px;width:923px;height:418px"></div>
<div class="a ctitle" style="left:222px;top:1574px;letter-spacing:-0.216px">Revenue by Real Estate Type</div>
<svg class="a" style="left:446px;top:1577px" width="16" height="14" viewBox="0 0 16 14" fill="none" stroke="#333" stroke-width="1.3"><path d="M1 5 L8 1.5 L15 5 L8 8.5 Z"/><path d="M4 6.5 V10.5 Q8 13 12 10.5 V6.5"/><path d="M15 5 V9"/></svg>
<div class="a learn" style="left:464px;top:1576px;font-size:10.8px">Learn</div>
<svg class="a" style="left:1018px;top:1576px" width="14" height="14" viewBox="0 0 14 14" fill="none" stroke="#222" stroke-width="1.6"><path d="M7 1 V8.5 M3.8 5.5 L7 8.7 L10.2 5.5"/><path d="M1.5 9 V12.3 H12.5 V9"/></svg>
<div class="a export" style="left:1040px;top:1576px;font-size:12.6px;color:#2a2a2a">Export</div>
<div class="a period" style="left:222px;top:1611px">Last 3 years</div>
<svg class="a" style="left:300px;top:1614.5px" width="10" height="7" viewBox="0 0 10 7"><path d="M1.5 1.5 L5 5 L8.5 1.5" stroke="#222" stroke-width="1.5" fill="none"/></svg>
<div class="pill" style="left:982px;top:1607px;width:105px;font-size:11.8px"><b>-46.5%</b> past year</div>
<svg class="a" style="left:0;top:0" width="1800" height="1992"><line x1="283" y1="1813.8" x2="1087" y2="1813.8" stroke="#dcdcdf" stroke-width="1"/><line x1="283" y1="1759.7" x2="1087" y2="1759.7" stroke="#dcdcdf" stroke-width="1"/><line x1="283" y1="1705.6" x2="1087" y2="1705.6" stroke="#dcdcdf" stroke-width="1"/><line x1="283" y1="1651.6" x2="1087" y2="1651.6" stroke="#dcdcdf" stroke-width="1"/><path d="M464.6,1867.8 L474.0,1864.0 L496.7,1831.0 L517.4,1783.7 L536.3,1799.8 L559.0,1857.4 L576.0,1867.8 L589.0,1867.8 L606.2,1854.6 L622.3,1867.8 L640.0,1867.8 L650.6,1864.4 L660.0,1867.8 L678.0,1867.8 L696.9,1839.5 L719.6,1852.7 L762.5,1702.5 L782.7,1816.8 L788.3,1816.8 L808.2,1679.8 L828.0,1818.7 L849.7,1867.8 L856.3,1867.8 L877.1,1842.8 L896.0,1842.8 L941.3,1859.3 L965.0,1860.6 L990.5,1844.7 L1013.1,1769.6 L1032.6,1730.8 L1052.8,1762.0 L1077.0,1759.7 L1077.0,1867.8 Z" fill="none" stroke="#fff" stroke-width="14" stroke-linejoin="round"/><path d="M464.6,1867.8 L474.0,1864.0 L496.7,1831.0 L517.4,1783.7 L536.3,1799.8 L559.0,1857.4 L576.0,1867.8 L589.0,1867.8 L606.2,1854.6 L622.3,1867.8 L640.0,1867.8 L650.6,1864.4 L660.0,1867.8 L678.0,1867.8 L696.9,1839.5 L719.6,1852.7 L762.5,1702.5 L782.7,1816.8 L788.3,1816.8 L808.2,1679.8 L828.0,1818.7 L849.7,1867.8 L856.3,1867.8 L877.1,1842.8 L896.0,1842.8 L941.3,1859.3 L965.0,1860.6 L990.5,1844.7 L1013.1,1769.6 L1032.6,1730.8 L1052.8,1762.0 L1077.0,1759.7 L1077.0,1867.8 Z" fill="#86e3ca"/><line x1="283" y1="1867.8" x2="1087" y2="1867.8" stroke="#1e1e1e" stroke-width="2"/><line x1="315.4" y1="1867.8" x2="315.4" y2="1875.8" stroke="#1e1e1e" stroke-width="2"/><line x1="360.2" y1="1867.8" x2="360.2" y2="1875.8" stroke="#1e1e1e" stroke-width="2"/><line x1="404.9" y1="1867.8" x2="404.9" y2="1875.8" stroke="#1e1e1e" stroke-width="2"/><line x1="449.7" y1="1867.8" x2="449.7" y2="1875.8" stroke="#1e1e1e" stroke-width="2"/><line x1="494.5" y1="1867.8" x2="494.5" y2="1875.8" stroke="#1e1e1e" stroke-width="2"/><line x1="539.2" y1="1867.8" x2="539.2" y2="1875.8" stroke="#1e1e1e" stroke-width="2"/><line x1="584.0" y1="1867.8" x2="584.0" y2="1875.8" stroke="#1e1e1e" stroke-width="2"/><line x1="628.8" y1="1867.8" x2="628.8" y2="1875.8" stroke="#1e1e1e" stroke-width="2"/><line x1="673.6" y1="1867.8" x2="673.6" y2="1875.8" stroke="#1e1e1e" stroke-width="2"/><line x1="718.3" y1="1867.8" x2="718.3" y2="1875.8" stroke="#1e1e1e" stroke-width="2"/><line x1="763.1" y1="1867.8" x2="763.1" y2="1875.8" stroke="#1e1e1e" stroke-width="2"/><line x1="807.9" y1="1867.8" x2="807.9" y2="1875.8" stroke="#1e1e1e" stroke-width="2"/><line x1="852.6" y1="1867.8" x2="852.6" y2="1875.8" stroke="#1e1e1e" stroke-width="2"/><line x1="897.4" y1="1867.8" x2="897.4" y2="1875.8" stroke="#1e1e1e" stroke-width="2"/><line x1="942.2" y1="1867.8" x2="942.2" y2="1875.8" stroke="#1e1e1e" stroke-width="2"/><line x1="987.0" y1="1867.8" x2="987.0" y2="1875.8" stroke="#1e1e1e" stroke-width="2"/><line x1="1031.7" y1="1867.8" x2="1031.7" y2="1875.8" stroke="#1e1e1e" stroke-width="2"/><line x1="1076.5" y1="1867.8" x2="1076.5" y2="1875.8" stroke="#1e1e1e" stroke-width="2"/></svg>
<div class="a ylab" style="left:219px;width:60px;top:1859.8px">0</div>
<div class="a ylab" style="left:219px;width:60px;top:1805.8px">45K</div>
<div class="a ylab" style="left:219px;width:60px;top:1751.7px">90K</div>
<div class="a ylab" style="left:219px;width:60px;top:1697.6px">135K</div>
<div class="a ylab" style="left:219px;width:60px;top:1643.6px">180K</div>
<div class="a xlab" style="left:285.4px;width:60px;text-align:center;top:1878.3px">May</div>
<div class="a xlab" style="left:330.2px;width:60px;text-align:center;top:1878.3px">Jul</div>
<div class="a xlab" style="left:374.9px;width:60px;text-align:center;top:1878.3px">Sep</div>
<div class="a xlab" style="left:419.7px;width:60px;text-align:center;top:1878.3px">Nov</div>
<div class="a xlab" style="left:464.5px;width:60px;text-align:center;top:1878.3px">Jan</div>
<div class="a xlab" style="left:509.2px;width:60px;text-align:center;top:1878.3px">Mar</div>
<div class="a xlab" style="left:554.0px;width:60px;text-align:center;top:1878.3px">May</div>
<div class="a xlab" style="left:598.8px;width:60px;text-align:center;top:1878.3px">Jul</div>
<div class="a xlab" style="left:643.6px;width:60px;text-align:center;top:1878.3px">Sep</div>
<div class="a xlab" style="left:688.3px;width:60px;text-align:center;top:1878.3px">Nov</div>
<div class="a xlab" style="left:733.1px;width:60px;text-align:center;top:1878.3px">Jan</div>
<div class="a xlab" style="left:777.9px;width:60px;text-align:center;top:1878.3px">Mar</div>
<div class="a xlab" style="left:822.6px;width:60px;text-align:center;top:1878.3px">May</div>
<div class="a xlab" style="left:867.4px;width:60px;text-align:center;top:1878.3px">Jul</div>
<div class="a xlab" style="left:912.2px;width:60px;text-align:center;top:1878.3px">Sep</div>
<div class="a xlab" style="left:957.0px;width:60px;text-align:center;top:1878.3px">Nov</div>
<div class="a xlab" style="left:1001.7px;width:60px;text-align:center;top:1878.3px">Jan</div>
<div class="a xlab" style="left:1046.5px;width:60px;text-align:center;top:1878.3px">Mar</div>
<div class="a xlab" style="left:264.4px;width:60px;text-align:center;top:1903.3px;font-size:14.5px">2023</div>
<div class="a xlab" style="left:474.0px;width:60px;text-align:center;top:1903.3px;font-size:14.5px">2024</div>
<div class="a xlab" style="left:748.0px;width:60px;text-align:center;top:1903.3px;font-size:14.5px">2025</div>
<div class="a cur" style="left:196px;width:70px;text-align:center;top:1751px">Currency</div>
<svg class="a" style="left:509px;top:1934.5px" width="15.5" height="15.5" viewBox="0 0 14 14"><rect x="0" y="0" width="14" height="14" rx="2" fill="#7ccbf0"/><path d="M2.8 7 L5.8 10 L11.2 3.8" stroke="#fff" stroke-width="1.9" fill="none"/></svg>
<div class="a leg" style="left:534px;top:1935.5px">Unique</div>
<svg class="a" style="left:585px;top:1934.5px" width="15.5" height="15.5" viewBox="0 0 14 14"><rect x="0" y="0" width="14" height="14" rx="2" fill="#f07a45"/><path d="M2.8 7 L5.8 10 L11.2 3.8" stroke="#fff" stroke-width="1.9" fill="none"/></svg>
<div class="a leg" style="left:609px;top:1935.5px">B&amp;B</div>
<svg class="a" style="left:644px;top:1934.5px" width="15.5" height="15.5" viewBox="0 0 14 14"><rect x="0" y="0" width="14" height="14" rx="2" fill="#3a48a3"/><path d="M2.8 7 L5.8 10 L11.2 3.8" stroke="#fff" stroke-width="1.9" fill="none"/></svg>
<div class="a leg" style="left:668px;top:1935.5px">Apartment</div>
<svg class="a" style="left:741px;top:1934.5px" width="15.5" height="15.5" viewBox="0 0 14 14"><rect x="0" y="0" width="14" height="14" rx="2" fill="#86e0c8"/><path d="M2.8 7 L5.8 10 L11.2 3.8" stroke="#fff" stroke-width="1.9" fill="none"/></svg>
<div class="a leg" style="left:766px;top:1935.5px">House</div>
<svg class="a" style="left:1123px;top:141px" width="677" height="1851" viewBox="0 0 677 1851"><rect x="0" y="0" width="677" height="1851" fill="#a4bff0"/><polygon points="0,341 16,305 54,333 86,352 103,361 118,359 129,346 142,350 137,365 129,382 125,412 110,420 97,435 84,458 88,469 103,488 129,505 139,518 125,526 118,539 95,531 76,531 73,541 73,560 103,582 125,592 114,601 112,612 125,628 144,640 150,651 177,655 188,649 195,641 206,629 217,639 222,659 255,662 260,644 253,629 263,630 272,651 282,656 293,644 295,619 302,614 310,626 322,632 326,641 333,651 347,647 343,670 353,703 375,730 344,721 321,708 299,699 277,692 265,686 254,699 235,709 231,731 239,748 224,756 220,763 229,775 246,780 265,786 258,807 258,835 265,860 280,882 303,910 0,910" fill="#ccf5df" /><polygon points="0,341 16,305 54,333 86,352 103,361 118,359 129,346 142,350 137,365 129,382 125,412 110,420 97,435 84,458 0,420" fill="#bcefd1" /><polygon points="0,288 5,291 10,301 8,320 3,331 0,336" fill="#bcefd1" /><polygon points="0,679 27,709 62,739 69,910 0,910" fill="#c3edd6" /><polygon points="159,366 165,352 187,351 204,341 213,337 228,338 241,343 248,351 250,363 259,377 268,390 275,403 277,419 273,430 270,447 257,452 253,457 250,463 268,462 270,467 257,475 248,463 241,452 231,441 221,437 215,432 204,422 193,413 187,397 181,386 170,381 157,377" fill="#c6f0d8" /><polygon points="276,459 281,449 286,446 287,456 281,467" fill="#c6f0d8" /><polygon points="247,471 255,466 269,465 273,470 265,476 253,475" fill="#c6f0d8" /><polygon points="319,438 337,451 357,471 374,489 401,492 433,492 452,495 468,517 477,527 467,531 433,526 410,543 395,559 399,583 387,591 374,571 379,553 365,531 351,509 345,494 329,477 304,455" fill="#c6f0d8" /><polygon points="296,471 317,484 347,499 359,514 352,519 327,509 302,494 292,479" fill="#c6f0d8" /><polygon points="205,519 212,534 235,525 244,528 251,545 261,557 267,571 274,586 271,594 250,603 245,600 238,603 253,612 260,623 253,626 238,619 224,612 212,603 205,593 201,571 201,542" fill="#c6f0d8" /><polygon points="130,589 138,588 157,602 168,625 161,624 144,609 131,600" fill="#c6f0d8" /><polygon points="393,601 419,597 437,619 450,650 433,655 455,668 481,672 455,686 446,708 450,730 410,721 379,708 375,675 379,650 395,646 386,619" fill="#c6f0d8" /><polygon points="508,668 526,681 544,703 561,715 539,732 513,726 499,708 504,681" fill="#c6f0d8" /><polygon points="641,712 677,705 677,751 657,741 639,727" fill="#c6f0d8" /><polygon points="307,604 317,599 322,609 313,614" fill="#c6f0d8" /><polygon points="342,619 355,611 362,624 349,629" fill="#c6f0d8" /><polygon points="422,599 433,594 439,604 427,609" fill="#c6f0d8" /><polyline points="67,531 137,519 207,489 277,459 317,449" fill="none" stroke="#95b5ec" stroke-width="0.8" stroke-linejoin="round" /><polyline points="277,459 317,519 347,599 397,679 437,759 477,910" fill="none" stroke="#98b7ec" stroke-width="0.8" stroke-linejoin="round" /><polygon points="191.5999999999999,308 408.79999999999995,395 524,544 378.5999999999999,600.7 153.79999999999995,416.5 157.5999999999999,332.2" fill="rgba(40,40,120,0.09)" stroke="#1c2340" stroke-width="2"/><polyline points="0,90 152,210.60000000000002 242.5999999999999,195.5 276.5999999999999,194.7 677,470" fill="none" stroke="#7a2e9c" stroke-width="2.2" stroke-linejoin="round" /><polyline points="677,611 610,618 554,866 526,899 517,910" fill="none" stroke="#7a2e9c" stroke-width="2.2" stroke-linejoin="round" /><polyline points="44,910 76,886 112,863 108,854 120,831 122,778 131,775 118,765 129,746 133,739 148,727 159,709 173,714 182,731 190,727 193,731 184,754 178,746 175,754 163,758 167,761 186,769 205,780 209,790 214,780 226,782 228,795 239,799 228,803 201,818 186,831 188,839 197,845 182,843 173,852 167,864 173,886 197,898 209,881 224,881 231,890 228,901 241,910" fill="none" stroke="#7a2e9c" stroke-width="2.2" stroke-linejoin="round" /><polyline points="0,479 17,499 37,511 62,527 52,549 57,564 67,574 77,589 91,611 105,629 122,645 141,648 157,659 169,679 177,702 181,719 193,739 207,754 215,779 212,809 195,834 187,859 195,874 217,889 240,904" fill="none" stroke="#8ca6b6" stroke-width="1.5" stroke-linejoin="round" /><rect x="0" y="910" width="677" height="941" fill="#a4bff0"/></svg>
<div class="a" style="left:1158px;top:526.8px;font-size:10.4px;color:#333;text-shadow:0 0 2px #fff,0 0 2px #fff;">La Gloria</div>
<div class="a" style="left:1144px;top:653.8px;font-size:10.4px;color:#333;text-shadow:0 0 2px #fff,0 0 2px #fff;">Almirante</div>
<div class="a" style="left:1216px;top:747.8px;font-size:10.4px;color:#333;text-shadow:0 0 2px #fff,0 0 2px #fff;">Valle de</div>
<div class="a" style="left:1206px;top:759.8px;font-size:10.4px;color:#333;text-shadow:0 0 2px #fff,0 0 2px #fff;">Agua Arriba</div>
<div class="a" style="left:1123px;top:807.8px;font-size:10.4px;color:#333;text-shadow:0 0 2px #fff,0 0 2px #fff;">el Risco</div>
<div class="a" style="left:1199px;top:879.8px;font-size:10.4px;color:#333;text-shadow:0 0 2px #fff,0 0 2px #fff;">Cauchero</div>
<div class="a" style="left:1326px;top:966.8px;font-size:10.4px;color:#333;text-shadow:0 0 2px #fff,0 0 2px #fff;">Punta Robalo</div>
<div class="a" style="left:1402px;top:821.8px;font-size:10.4px;color:#333;text-shadow:0 0 2px #fff,0 0 2px #fff;">Aguacate</div>
<div class="a" style="left:1443px;top:839.8px;font-size:10.4px;color:#333;text-shadow:0 0 2px #fff,0 0 2px #fff;">Loma Partida</div>
<div class="a" style="left:1520px;top:802.8px;font-size:10.4px;color:#333;text-shadow:0 0 2px #fff,0 0 2px #fff;">Punta Laurel</div>
<div class="a" style="left:1563px;top:657.8px;font-size:10.4px;color:#333;text-shadow:0 0 2px #fff,0 0 2px #fff;">Punta Vieja</div>
<div class="a" style="left:1480px;top:641.8px;font-size:10.4px;color:#333;text-shadow:0 0 2px #fff,0 0 2px #fff;">Bas</div>
<div class="a" style="left:1321px;top:706.8px;font-size:10.4px;color:#333;font-style:italic;text-shadow:0 0 2px #fff,0 0 2px #fff;">Isla Cristóbal</div>
<div class="a" style="left:1523px;top:830.8px;font-size:10.4px;color:#333;font-style:italic;text-shadow:0 0 2px #fff,0 0 2px #fff;">Popa Island</div>
<div class="a" style="left:1622px;top:839.8px;font-size:10.4px;color:#333;font-style:italic;text-shadow:0 0 2px #fff,0 0 2px #fff;">Cayo de Agua</div>
<div class="a" style="left:1147px;top:707.5px;font-size:7.5px;color:#555;font-weight:bold;letter-spacing:0.55px;text-shadow:0 0 2px #fff,0 0 2px #fff;">RIO OESTE</div>
<div class="a" style="left:1337px;top:803.5px;font-size:7.5px;color:#555;font-weight:bold;letter-spacing:0.55px;text-shadow:0 0 2px #fff,0 0 2px #fff;">HOPE WELL</div>
<div class="a" style="left:1286px;top:992.5px;font-size:7.5px;color:#555;font-weight:bold;letter-spacing:0.55px;text-shadow:0 0 2px #fff,0 0 2px #fff;">PALMA REAL</div>
<div class="a" style="left:1340px;top:725.5px;font-size:7.5px;color:#555;font-weight:bold;letter-spacing:0.55px;text-shadow:0 0 2px #fff,0 0 2px #fff;">BOCATORITO</div>
<div class="a" style="left:1490px;top:779.5px;font-size:7.5px;color:#555;font-weight:bold;letter-spacing:0.55px;text-shadow:0 0 2px #fff,0 0 2px #fff;">BUENA VISTA</div>
<div class="a" style="left:1621px;top:822.5px;font-size:7.5px;color:#555;font-weight:bold;letter-spacing:0.55px;text-shadow:0 0 2px #fff,0 0 2px #fff;">NISPERO POINT</div>
<div class="a" style="left:1763px;top:847.5px;font-size:7.5px;color:#555;font-weight:bold;letter-spacing:0.55px;text-shadow:0 0 2px #fff,0 0 2px #fff;">PUNTA S</div>
<div class="a" style="left:1788px;top:881.5px;font-size:7.5px;color:#555;font-weight:bold;letter-spacing:0.55px;text-shadow:0 0 2px #fff,0 0 2px #fff;">MU</div>
<div class="a" style="left:1475px;top:697.5px;font-size:7.5px;color:#555;font-weight:bold;letter-spacing:0.55px;text-shadow:0 0 2px #fff,0 0 2px #fff;">MACCA BITE</div>
<div class="a" style="left:1498px;top:725.5px;font-size:7.5px;color:#555;font-weight:bold;letter-spacing:0.55px;text-shadow:0 0 2px #fff,0 0 2px #fff;">CRAWL CAY</div>
<div class="a" style="left:1449px;top:598.5px;font-size:7.5px;color:#555;font-weight:bold;letter-spacing:0.55px;text-shadow:0 0 2px #fff,0 0 2px #fff;">RED FROG</div>
<div class="a" style="left:1455px;top:606.5px;font-size:7.5px;color:#555;font-weight:bold;letter-spacing:0.55px;text-shadow:0 0 2px #fff,0 0 2px #fff;">BEACH</div>
<div class="a" style="left:1272px;top:502.5px;font-size:7.5px;color:#555;font-weight:bold;letter-spacing:0.55px;text-shadow:0 0 2px #fff,0 0 2px #fff;">BOCA DEL</div>
<div class="a" style="left:1278px;top:511.5px;font-size:7.5px;color:#555;font-weight:bold;letter-spacing:0.55px;text-shadow:0 0 2px #fff,0 0 2px #fff;">DRAGO</div>
<div class="a" style="left:1326px;top:536.5px;font-size:7.5px;color:#555;font-weight:bold;letter-spacing:0.55px;text-shadow:0 0 2px #fff,0 0 2px #fff;">LA GRUTA</div>
<div class="a" style="left:1298px;top:557.5px;font-size:7.5px;color:#555;font-weight:bold;letter-spacing:0.55px;text-shadow:0 0 2px #fff,0 0 2px #fff;">PUNTA CARACOL</div>
<div class="a" style="left:1376px;top:553.5px;font-size:7.5px;color:#555;font-weight:bold;letter-spacing:0.55px;text-shadow:0 0 2px #fff,0 0 2px #fff;">PAUNCH</div>
<div class="a" style="left:1361px;top:570.5px;font-size:7.5px;color:#555;font-weight:bold;letter-spacing:0.55px;text-shadow:0 0 2px #fff,0 0 2px #fff;">BIG</div>
<div class="a" style="left:1123px;top:572.5px;font-size:7.5px;color:#555;font-weight:bold;letter-spacing:0.55px;text-shadow:0 0 2px #fff,0 0 2px #fff;">'O</div>
<svg class="a" style="left:1260px;top:590px" width="230" height="220" viewBox="0 0 230 220"><path id="arc" d="M16,8 L24,62 Q30,118 46,148 Q66,172 100,180 L200,188" fill="none"/><text font-family="Liberation Sans" font-size="10.5" font-weight="bold" fill="#3474d4" letter-spacing="4.1" dominant-baseline="middle"><textPath href="#arc">BOCAS DEL TORO ARCHIPELAGO</textPath></text></svg>
<div class="a" style="left:1384px;top:532px;width:8px;height:8px;border-radius:50%;background:#8b3a98"></div>
<div class="a" style="left:1391px;top:559px;width:8px;height:8px;border-radius:50%;background:#e6a6ea;border:1px solid #fff"></div>
<div class="a" style="left:1401px;top:597px;width:10px;height:10px;border-radius:50%;background:#f0c6f0;border:1.5px solid #fff"></div>
<div class="a" style="left:1432px;top:598px;width:10px;height:10px;border-radius:50%;background:#c65fd2;border:1.5px solid #fff"></div>
<div class="a" style="left:1375px;top:569px;width:31px;height:19px;border-radius:9px;background:#f3c8f3;border:1.5px solid #fff;font-size:10.5px;font-weight:bold;color:#333;text-align:center;line-height:16px">14K</div>
<div class="a" style="left:1493px;top:643px;width:32px;height:19px;border-radius:9px;background:#d88ee0;border:1.5px solid #fff;font-size:10.5px;font-weight:bold;color:#333;text-align:center;line-height:16px">29K</div>
<div class="a" style="left:1256px;top:780px;width:14px;height:15px;background:#fff;border:1px solid #666;border-radius:3px 3px 7px 7px;font-size:7px;font-weight:bold;color:#444;text-align:center;line-height:13px">11</div>
<div class="a" style="left:1326px;top:886px;width:14px;height:15px;background:#fff;border:1px solid #666;border-radius:3px 3px 7px 7px;font-size:7px;font-weight:bold;color:#444;text-align:center;line-height:13px">11</div>
<div class="a" style="left:1332px;top:1012px;width:14px;height:15px;background:#fff;border:1px solid #666;border-radius:3px 3px 7px 7px;font-size:7px;font-weight:bold;color:#444;text-align:center;line-height:13px">11</div>
<div class="a" style="left:1137px;top:155px;width:166px;height:42px;background:#fff;border-radius:4px;box-shadow:0 1px 2px rgba(0,0,0,.1)"></div>
<div class="a" style="left:1147px;top:167px;font-size:14.5px;font-weight:bold;color:#111">Revenue</div>
<svg class="a" style="left:1283px;top:173px" width="10" height="7" viewBox="0 0 10 7"><path d="M1.5 1.5 L5 5 L8.5 1.5" stroke="#222" stroke-width="1.5" fill="none"/></svg>
<div class="a" style="left:1138px;top:208px;width:165px;height:105px;background:#fff;border-radius:4px;box-shadow:0 1px 2px rgba(0,0,0,.1)"></div>
<div class="a" style="left:1152px;top:222.5px;width:13px;height:13px;border-radius:50%;background:#f1d1f5"></div>
<div class="a" style="left:1172px;top:222px;font-size:11px;font-weight:bold;color:#222">&lt; 15K</div>
<div class="a" style="left:1152px;top:243.5px;width:13px;height:13px;border-radius:50%;background:#e3a2ea"></div>
<div class="a" style="left:1172px;top:243px;font-size:11px;font-weight:bold;color:#222">15K - 37K</div>
<div class="a" style="left:1152px;top:263.5px;width:13px;height:13px;border-radius:50%;background:#c970d8"></div>
<div class="a" style="left:1172px;top:263px;font-size:11px;font-weight:bold;color:#222">37K - 107K</div>
<div class="a" style="left:1152px;top:284.5px;width:13px;height:13px;border-radius:50%;background:#8a3b97"></div>
<div class="a" style="left:1172px;top:284px;font-size:11px;font-weight:bold;color:#222">&gt; 107K</div>
<div class="a" style="left:1601px;top:155px;width:186px;height:35px;background:#fff;border-radius:18px;box-shadow:0 1px 4px rgba(0,0,0,.15)"></div>
<svg class="a" style="left:1663px;top:166px" width="13" height="13" viewBox="0 0 13 13" fill="none" stroke="#333" stroke-width="1.2"><path d="M1.5 11.5 V5.5 L6.5 1.5 L11.5 5.5 V11.5 Z"/><path d="M4.8 11.5 V8.5 Q6.5 7.2 8.2 8.5 V11.5"/></svg>
<div class="a" style="left:1680px;top:165px;font-size:13px;color:#333">Listings</div>
<div class="a" style="left:1137px;top:848px;width:35px;height:34px;background:#fff;border-radius:5px;box-shadow:0 1px 2px rgba(0,0,0,.12)"></div>
<div class="a" style="left:1137px;top:888px;width:35px;height:34px;background:#fff;border-radius:5px;box-shadow:0 1px 2px rgba(0,0,0,.12)"></div>
<div class="a" style="left:1137px;top:928px;width:35px;height:69px;background:#fff;border-radius:5px;box-shadow:0 1px 2px rgba(0,0,0,.12)"></div>
<div class="a" style="left:1137px;top:1003px;width:35px;height:34px;background:#fff;border-radius:5px;box-shadow:0 1px 2px rgba(0,0,0,.12)"></div>
<svg class="a" style="left:1146px;top:851px" width="17" height="17" viewBox="0 0 17 17" fill="none" stroke="#111" stroke-width="1.5"><circle cx="8.5" cy="8.5" r="5.5"/><circle cx="8.5" cy="8.5" r="2.2"/><path d="M8.5 1 V3 M8.5 14 V16 M1 8.5 H3 M14 8.5 H16"/></svg>
<div class="a" style="left:1137px;top:870px;width:35px;text-align:center;font-size:7.5px;color:#555">Reset</div>
<svg class="a" style="left:1146px;top:891px" width="17" height="17" viewBox="0 0 17 17" fill="none" stroke="#111" stroke-width="1.5"><path d="M3 14 L2.5 15 L4 14.5 L14 4.5 Q14.5 3 13 2.5 L3 12.5 Z"/></svg>
<div class="a" style="left:1137px;top:910px;width:35px;text-align:center;font-size:7.5px;color:#555">Redraw</div>
<div class="a" style="left:1137px;top:936px;width:35px;text-align:center;font-size:14px;color:#333">+</div>
<div class="a" style="left:1137px;top:962px;width:35px;height:1px;background:#e6e6e6"></div>
<div class="a" style="left:1137px;top:970px;width:35px;text-align:center;font-size:14px;color:#333">&#8211;</div>
<svg class="a" style="left:1144px;top:1008px" width="22" height="22" viewBox="0 0 22 22" fill="none" stroke="#111" stroke-width="1.6"><path d="M13 3 H19 V9 M19 3 L12.5 9.5 M3 13 V19 H9 M3 19 L9.5 12.5"/></svg>
<div class="a" style="left:1186px;top:1002px;width:601px;height:35px;border-radius:6px;background:rgba(38,37,50,0.58)"></div>
<div class="a" style="left:1198px;top:1012px;font-size:11.6px;font-weight:bold;color:#fff">12 listings selected</div>
<svg class="a" style="left:1762px;top:1012px" width="15" height="15" viewBox="0 0 15 15"><path d="M2 2 L13 13 M13 2 L2 13" stroke="#fff" stroke-width="1.8"/></svg>
<div class="a" style="left:1132px;top:1030px;font-size:14px;font-weight:bold;color:#fff;text-shadow:0 0 1px #555,0 0 1px #555">Google</div>
<div class="a" style="left:1573px;top:1038px;width:227px;height:13px;background:rgba(245,245,245,.8)"></div>
<div class="a" style="left:1576px;top:1039px;font-size:8.5px;color:#333">Keyboard shortcuts &nbsp;|&nbsp; Map Data ©2026 Google &nbsp;|&nbsp; Terms</div>
</body></html>
